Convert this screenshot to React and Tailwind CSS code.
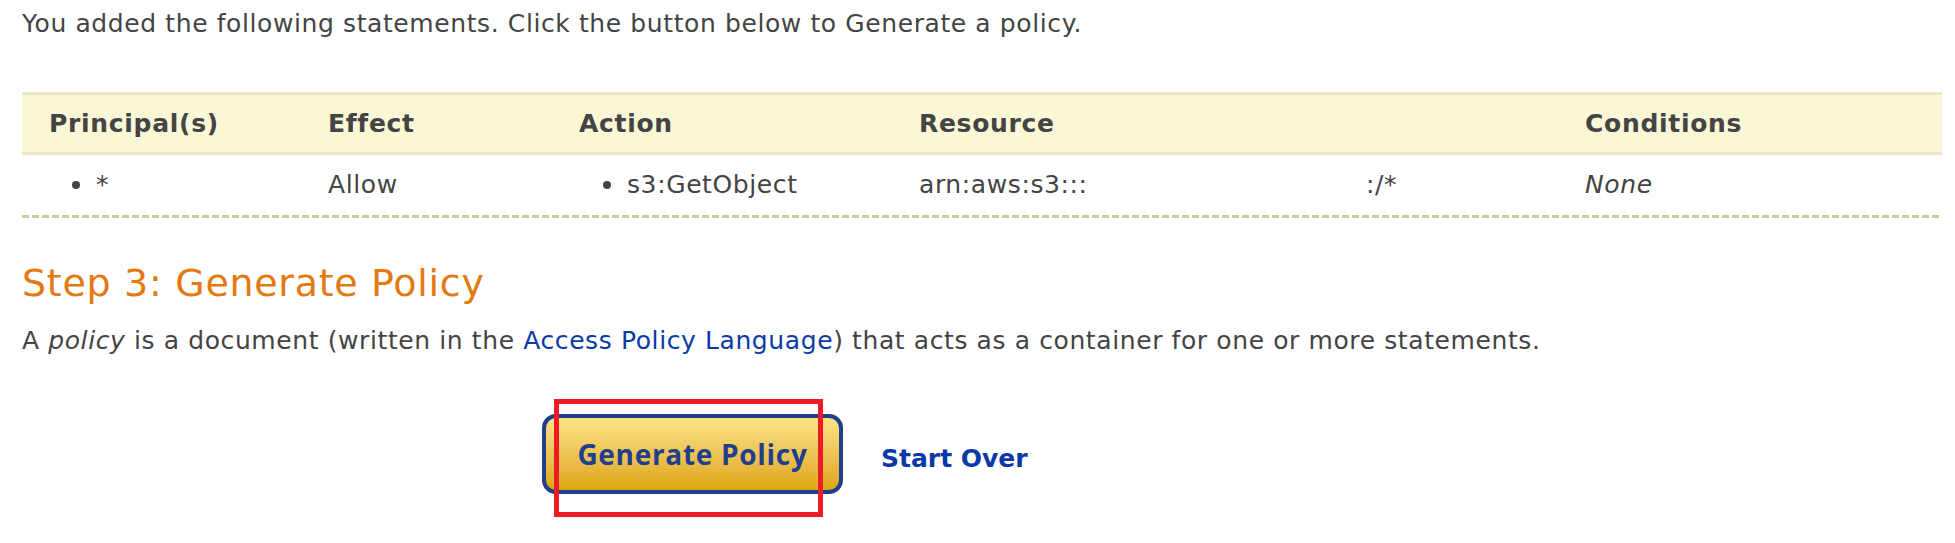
import React from "react";

const Bullet = () => (
  <span className="inline-block w-[8px] h-[8px] rounded-full bg-[#444444] mr-[16px] shrink-0" />
);

export default function App() {
  return (
    <div className="w-full h-[543px] bg-white px-[22px] text-[25px] tracking-[0.6px] text-[#444444] font-['DejaVu_Sans',Verdana,sans-serif] overflow-hidden">
      <p className="pt-[6px] leading-[36px]">
        You added the following statements. Click the button below to Generate a policy.
      </p>

      <div className="mt-[50px] w-[1920px]">
        <div className="grid grid-cols-[279px_251px_340px_666px_1fr] h-[63px] items-center bg-[#faf7d7] border-y-[3px] border-[#ebe7c4] font-bold tracking-[0.7px]">
          <div className="pl-[27px]">Principal(s)</div>
          <div className="pl-[27px]">Effect</div>
          <div className="pl-[27px]">Action</div>
          <div className="pl-[27px]">Resource</div>
          <div className="pl-[27px]">Conditions</div>
        </div>
        <div className="grid grid-cols-[279px_251px_340px_666px_1fr] h-[60px] items-center">
          <div className="pl-[50px] flex items-center">
            <Bullet />
            <span>*</span>
          </div>
          <div className="pl-[27px]">Allow</div>
          <div className="pl-[51px] flex items-center">
            <Bullet />
            <span>s3:GetObject</span>
          </div>
          <div className="pl-[27px] flex items-center">
            <span className="w-[447px]">arn:aws:s3:::</span>
            <span>:/*</span>
          </div>
          <div className="pl-[27px] italic">None</div>
        </div>
        <div className="h-[3px] bg-[repeating-linear-gradient(to_right,#cbca98_0px,#cbca98_7px,transparent_7px,transparent_10px)]" />
      </div>

      <h2 className="mt-[42px] text-[38px] leading-[46px] tracking-[0.7px] text-[#e47911] font-normal">
        Step 3: Generate Policy
      </h2>
      <p className="mt-[17px] leading-[36px]">
        A <em>policy</em> is a document (written in the{" "}
        <a className="text-[#0a3aa8]">Access Policy Language</a>) that acts as a container for one or more statements.
      </p>

      <div className="mt-[55px] ml-[520px] flex items-center relative">
        <button className="w-[301px] h-[80px] rounded-[14px] border-[4px] border-[#1f3f8c] bg-linear-to-b from-[#fee385] to-[#dca600] text-[#1f3f8c] font-['Open_Sans',sans-serif] font-bold text-[28px] tracking-[0.7px] flex items-center justify-center">
          Generate Policy
        </button>
        <a className="ml-[38px] mt-[10px] font-bold tracking-normal text-[#0a38a8]">Start Over</a>
        <div className="absolute left-[12px] top-[-15px] w-[269px] h-[118px] border-[5px] border-[#ed1c24] pointer-events-none" />
      </div>
    </div>
  );
}
